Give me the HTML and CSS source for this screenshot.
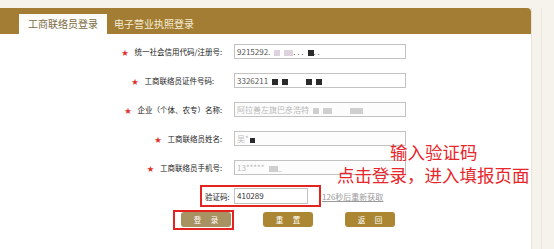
FILE: index.html
```html
<!DOCTYPE html>
<html lang="zh-CN">
<head>
    <meta charset="UTF-8">
    <title>登录</title>
    <link rel="stylesheet" href="styles.css">
</head>
<body>
<div id="page">
    <div id="panel">
        <div class="tabs">
            <div class="tab on">工商联络员登录</div>
            <div class="tab">电子营业执照登录</div>
        </div>
        <div class="form">
            <div class="row">
                <label class="lbl"><i>★</i>统一社会信用代码/注册号:</label>
                <div class="field">9215292.<span class="mask m1"></span><span class="mask m1 w2"></span>. . .<span class="mask m3"></span>. .</div>
            </div>
            <div class="row">
                <label class="lbl shift"><i>★</i>工商联络员证件号码:</label>
                <div class="field">3326211<span class="mask m3"></span><span class="mask m3"></span><span class="gap"></span><span class="mask m3"></span><span class="mask m3"></span></div>
            </div>
            <div class="row">
                <label class="lbl"><i>★</i>企业（个体、农专）名称:</label>
                <div class="field dim">阿拉善左旗巴彦浩特<span class="mask m2"></span><span class="mask m2 w2"></span><span class="gap"></span><span class="mask m2 w3"></span></div>
            </div>
            <div class="row">
                <label class="lbl"><i>★</i>工商联络员姓名:</label>
                <div class="field dim">吴*<span class="mask m3 sm"></span></div>
            </div>
            <div class="row">
                <label class="lbl"><i>★</i>工商联络员手机号:</label>
                <div class="field dim">13*****<span class="mask m2 w2"></span>_</div>
            </div>
            <div class="code-row">
                <div class="code-box">
                    <label class="code-lbl">验证码:</label>
                    <div class="field code">410289</div>
                </div>
                <a class="resend" href="#">126秒后重新获取</a>
            </div>
            <div class="btn-row">
                <span class="mark"><span class="btn login">登 录</span></span>
                <span class="btn reset">重 置</span>
                <span class="btn back">返 回</span>
            </div>
        </div>
        <div class="note">
            <p class="first">输入验证码</p>
            <p>点击登录，进入填报页面</p>
        </div>
    </div>
    <div id="side"></div>
</div>
</body>
</html>
```

FILE: styles.css
```css
body{margin:0;background:#f6f3ec;font-family:"Liberation Sans","Noto Sans CJK SC",sans-serif;}
#page{display:flex;padding-top:8px;height:241px;}
#panel{
    position:relative;
    width:532px;
    background:#fff;
    border-right:1px solid #ebe4d5;
    box-sizing:border-box;
}
#side{width:9px;border-right:1px solid #ece6da;}

.tabs{
    display:flex;
    align-items:flex-end;
    height:26px;
    padding-left:19px;
    background:#a27d33;
    border-radius:0 4px 0 0;
}
.tab{
    height:20px;
    line-height:20px;
    font-size:10px;
    color:#f6edd6;
    font-family:"Noto Sans CJK SC",sans-serif;
    padding-left:7px;
}
.tab.on{
    width:88px;
    padding-left:0;
    text-align:center;
    color:#7c6c46;
    background:linear-gradient(#fafaf6,#fff);
}

.form{padding-top:10px;}
.row{display:flex;align-items:center;height:15px;margin-bottom:14px;}
.lbl{
    width:226px;
    padding-right:4px;
    box-sizing:border-box;
    text-align:right;
    font-size:7.5px;
    color:#222;
    font-family:"Noto Sans CJK SC",sans-serif;
}
.lbl.shift{padding-right:12px;}
.lbl i{font-style:normal;color:#e0332c;font-size:7px;margin-right:6px;}
.field{
    margin-left:8px;
    width:172px;
    height:15px;
    line-height:13px;
    border:1px solid #c2c2c2;
    box-sizing:border-box;
    padding-left:2px;
    font-size:8px;
    color:#555;
    font-family:"Noto Sans CJK SC",sans-serif;
    white-space:nowrap;
    overflow:hidden;
}
.field.dim{color:#b9b9b9;background:#fcfcfc;}
.mask{display:inline-block;width:6px;height:6px;margin-left:4px;vertical-align:-1px;}
.mask.m1{background:#ddd3dd;}
.mask.m2{background:#cfcfcf;}
.mask.m3{background:#2a2a2a;}
.mask.w2{width:9px;}
.mask.w3{width:13px;}
.mask.sm{width:5px;height:5px;margin-left:1px;}
.gap{display:inline-block;width:14px;}

.code-row{display:flex;align-items:center;margin:-4px 0 3px 200px;}
.code-box{
    display:flex;
    align-items:center;
    height:22px;
    box-sizing:border-box;
    border:2px solid #e3231f;
    padding:0 11px 0 3px;
}
.code-lbl{width:29px;font-size:7.5px;color:#222;font-family:"Noto Sans CJK SC",sans-serif;}
.field.code{margin-left:0;width:74px;height:16px;line-height:14px;color:#333;}
.resend{margin-left:1px;font-size:8px;color:#9a9a9a;font-family:"Noto Sans CJK SC",sans-serif;white-space:nowrap;}

.btn-row{display:flex;align-items:flex-start;padding-left:173px;}
.mark{display:block;border:2px solid #e3231f;padding:0 1px 1px 6px;}
.btn{
    display:block;
    width:50px;
    height:15px;
    line-height:15px;
    border-radius:3px;
    text-align:center;
    font-size:7.5px;
    letter-spacing:4px;
    text-indent:4px;
    color:#fff;
    font-family:"Noto Sans CJK SC",sans-serif;
    background:#ab8734;
}
.btn.login{background:#a99262;}
.btn.reset{margin:2px 0 0 29px;}
.btn.back{margin:2px 0 0 32px;}

.note{
    position:absolute;
    left:337px;
    top:132px;
    color:#e8262b;
    font-size:17.5px;
    font-family:"Noto Sans CJK SC",sans-serif;
    white-space:nowrap;
}
.note p{margin:0;line-height:23px;}
.note .first{padding-left:53px;}
```
